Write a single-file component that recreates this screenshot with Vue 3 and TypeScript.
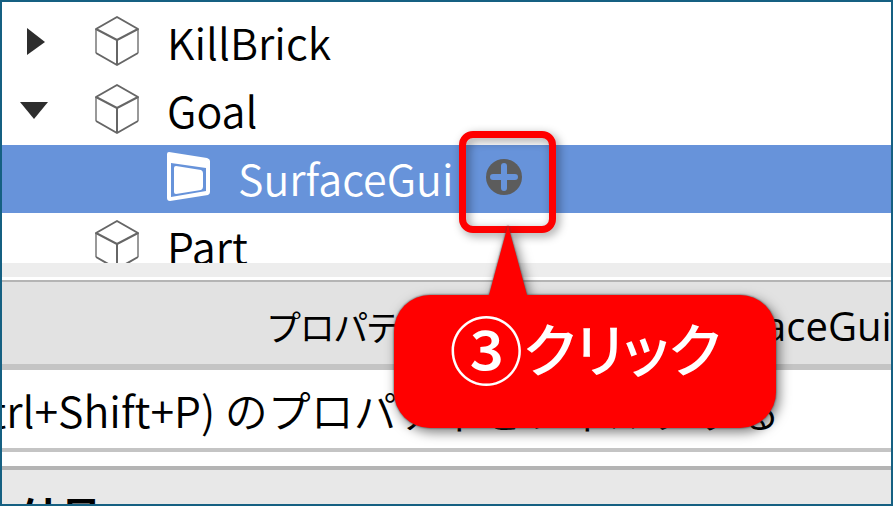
<script setup lang="ts">
import { ref } from 'vue'

interface TreeItem {
  name: string
  kind: 'part' | 'gui'
  state: 'closed' | 'open' | 'leaf'
}

const items: TreeItem[] = [
  { name: 'KillBrick', kind: 'part', state: 'closed' },
  { name: 'Goal', kind: 'part', state: 'open' },
  { name: 'SurfaceGui', kind: 'gui', state: 'leaf' },
  { name: 'Part', kind: 'part', state: 'leaf' },
]

const selected = ref('SurfaceGui')
const filter = ref('(Ctrl+Shift+P) のプロパティをフィルタする')
</script>

<template>
  <main class="window">
    <ul class="tree">
      <li
        v-for="item in items"
        :key="item.name"
        class="row"
        :class="{ selected: item.name === selected, child: item.kind === 'gui' }"
      >
        <button v-if="item.state !== 'leaf'" class="toggle" type="button" :aria-label="item.name" :aria-expanded="item.state === 'open'">
          <svg width="32" height="32" viewBox="0 0 32 32" aria-hidden="true">
            <path v-if="item.state === 'closed'" d="M9 3L27 17L9 30Z" />
            <path v-else d="M2 9H30L16 26Z" />
          </svg>
        </button>
        <span v-else class="toggle"></span>
        <svg v-if="item.kind === 'part'" class="icon" width="46" height="52" viewBox="0 0 46 52" aria-hidden="true">
          <path class="side" d="M2 14V38M44 14V38" />
          <path class="edge" d="M2 14L23 2L44 14L23 25ZM2 38L23 50L44 38M23 25V50" />
        </svg>
        <svg v-else class="icon" width="46" height="52" viewBox="0 0 46 52" aria-hidden="true">
          <path class="panel" fill-rule="evenodd" d="M4 1L42 7Q45 8 45 10V41Q45 43 43 44L5 50Q2 50 2 47V3Q2 1 4 1ZM6 12V46L41 40V17Z" />
          <path class="panel" d="M11 15L36 19Q38 20 38 22V36Q38 38 36 39L11 43Q9 43 9 41V17Q9 15 11 15Z" />
        </svg>
        <span class="name">{{ item.name }}</span>
        <button v-if="item.name === selected" class="add" type="button" aria-label="+">
          <svg width="36" height="36" viewBox="0 0 36 36" aria-hidden="true">
            <circle cx="18" cy="18" r="18" />
            <path d="M18 7V29M7 18H29" />
          </svg>
        </button>
      </li>
    </ul>
    <div class="splitter"></div>
    <h2 class="title"><span class="kana">プロパティ</span> - SurfaceGui "SurfaceGui"</h2>
    <div class="search">
      <input v-model="filter" type="text" aria-label="プロパティ" />
    </div>
    <h3 class="section">外見</h3>

    <div class="highlight"></div>
    <div class="callout">
      <svg class="tail" width="40" height="72" viewBox="0 0 40 72" aria-hidden="true">
        <path d="M1 72L20 2L39 72Z" />
      </svg>
      <p class="bubble"><span class="step">③</span><span class="action">クリック</span></p>
    </div>
  </main>
</template>

<style>
body {
  margin: 0;
}
</style>

<style scoped>
.window {
  position: relative;
  display: flex;
  flex-direction: column;
  box-sizing: border-box;
  height: 100vh;
  border: 2px solid #156082;
  overflow: hidden;
  background: #fff;
  color: #000;
  font-family: "Noto Sans CJK JP", sans-serif;
}
.tree {
  flex: none;
  height: 254px;
  margin: 0;
  padding: 7px 0 0;
  overflow: hidden;
  list-style: none;
}
.row {
  display: flex;
  align-items: center;
  box-sizing: border-box;
  height: 68px;
  padding: 0 0 4px 16px;
}
.selected {
  background: #6793da;
  color: #fff;
}
.child {
  padding-left: 87px;
}
button {
  padding: 0;
  border: 0;
  background: none;
}
svg {
  display: block;
}
.toggle {
  flex: none;
  width: 32px;
  height: 32px;
  margin-right: 44px;
  fill: #2d2d2d;
}
.icon {
  flex: none;
  margin-right: 27px;
  fill: none;
  stroke-width: 2;
  stroke-linejoin: round;
}
.edge {
  stroke: #666;
}
.side {
  stroke: #999;
}
.panel {
  fill: #fff;
}
.name {
  font-size: 43px;
  font-weight: 350;
  line-height: 62px;
}
.add {
  margin-left: 32px;
}
.add circle {
  fill: #5c5c5c;
}
.add path {
  stroke: #6793da;
  stroke-width: 6;
  stroke-linecap: round;
}
.splitter {
  flex: none;
  height: 14px;
  border-bottom: 3px solid #fff;
  background: #ededed;
}
.title {
  flex: none;
  height: 82px;
  margin: 0;
  padding-left: 266px;
  border-top: 2px solid #b4b4b4;
  border-bottom: 6px solid #c4c4c4;
  background: #e2e2e2;
  font: 400 40px/88px "Open Sans", "Noto Sans CJK JP", sans-serif;
  white-space: nowrap;
}
.kana {
  font-size: 35px;
  font-feature-settings: "palt";
}
.search {
  flex: none;
  height: 78px;
  border-bottom: 4px solid #c4c4c4;
}
.search input {
  box-sizing: border-box;
  width: 110%;
  height: 100%;
  margin-left: -52px;
  padding: 0;
  border: 0;
  background: none;
  color: #000;
  font: 350 43px "Noto Sans CJK JP", sans-serif;
}
.section {
  flex: 1;
  margin: 14px 0 0;
  padding: 16px 16px 0;
  border-top: 4px solid #b4b4b4;
  background: #e8e8e8;
  font-size: 42px;
  font-weight: 700;
  line-height: 60px;
}
.highlight {
  position: absolute;
  top: 129px;
  left: 457px;
  box-sizing: border-box;
  width: 97px;
  height: 102px;
  border: 7px solid #f00;
  border-radius: 14px;
  filter: drop-shadow(3px 3px 5px rgba(0, 0, 0, 0.4));
}
.callout {
  position: absolute;
  top: 221px;
  left: 392px;
  filter: drop-shadow(0 0 1px #444) drop-shadow(3px 4px 6px rgba(0, 0, 0, 0.5));
}
.tail {
  margin-left: 94px;
  fill: #f00;
}
.bubble {
  display: flex;
  align-items: center;
  justify-content: center;
  box-sizing: border-box;
  width: 382px;
  height: 133px;
  margin: 0;
  padding-bottom: 30px;
  border-radius: 36px;
  background: #f00;
  color: #fff;
}
.step {
  font-size: 74px;
  font-weight: 500;
  line-height: 100px;
}
.action {
  font-size: 58px;
  font-weight: 500;
  line-height: 100px;
  font-feature-settings: "palt";
}
</style>
